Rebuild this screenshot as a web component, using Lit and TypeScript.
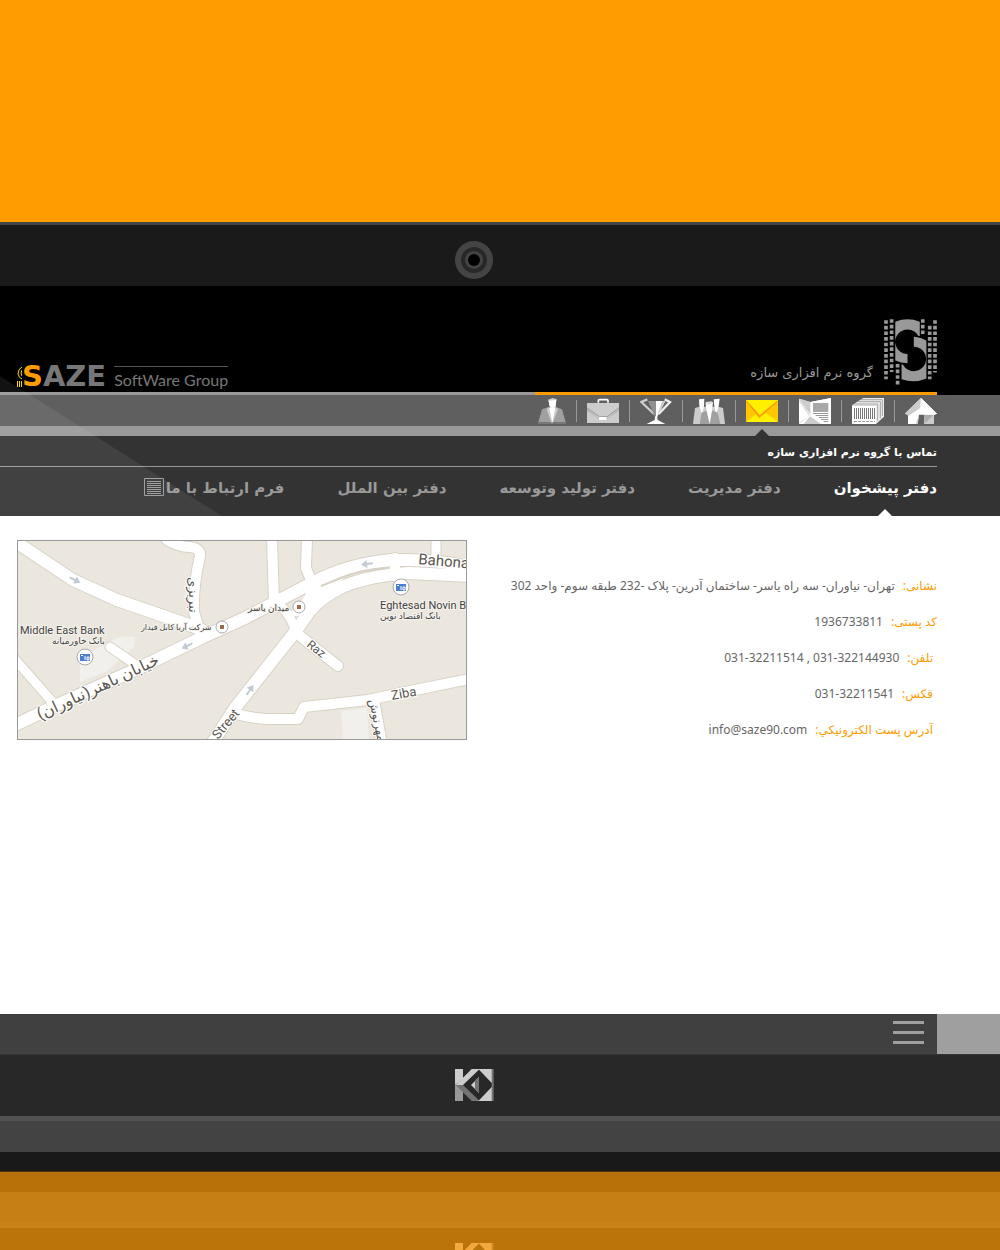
import { LitElement, html, svg, css } from "lit";
import { customElement } from "lit/decorators.js";

const person = svg`<path fill="#a0a0a0" d="M24 34 42 28H68L84 34 96 76H12Z"/><path fill="#777" d="M13 72H95L96 78H12Z"/><path fill="#ccc" d="M38 34 44 28H66L72 34 56 74H52Z"/><path fill="#fff" d="M46 30H64L55 74Z"/><path fill="#ccc" d="M42 5 56 0 68 4 67 10 44 12Z"/><path fill="#fff" d="M44 8 67 5 65 26 55 34 46 24Z"/>`;
const briefcase = svg`<path fill="none" stroke="#fff" stroke-width="5" d="M34 14V8Q34 5 37 5H60Q63 5 63 8V14"/><path fill="#ccc" d="M0 15H96V75H0Z"/><path fill="#b8b8b8" d="M0 32 36 60H60L96 32V75H0Z"/><path fill="#ccc" d="M0 75V40L36 62H60L96 40V75Z"/><path fill="none" stroke="#999" stroke-width="3" d="M0 30 37 56H60L96 30"/><path fill="#fff" d="M36 57H58V66H36Z"/>`;
const trophy = svg`<path fill="none" stroke="#ccc" stroke-width="7" d="M22 4 4 12 42 48"/><path fill="none" stroke="#eee" stroke-width="7" d="M74 4 90 12 56 48"/><path fill="#909090" d="M24 9H48V64Z"/><path fill="#fff" d="M48 9H76L48 64Z"/><path fill="#ccc" d="M66 9H76L50 60Z"/><path fill="#fff" d="M46 54H51L53 66 76 78H20L44 66Z"/>`;
const group = svg`<path fill="#ccc" d="M6 30 20 26H40L44 78H0ZM90 30 76 26H56L52 78H96Z"/><path fill="#fff" d="M18 4 34 2 33 24 27 48 19 24ZM62 4 80 2 77 24 70 48 64 24Z"/><path fill="#a0a0a0" d="M26 44 40 38H60L74 44 82 78H20Z"/><path fill="#fff" d="M38 16 60 12 57 38 50 78 40 36Z"/><path fill="#ddd" d="M38 12 56 10 60 18 38 20Z"/>`;
const mail = svg`<path fill="#ffc800" d="M0 6H96V72H0Z"/><path fill="#fff000" d="M0 72 36 44 48 54 60 44 96 72Z"/><path fill="none" stroke="#ff9c00" stroke-width="6" d="M2 8 40 56 94 8"/><path fill="#fff000" d="M0 6H96L42 51Z"/>`;
const book = svg`<path fill="#fff" d="M0 2 34 12 96 0V78H38L0 78Z"/><path fill="#ddd" d="M0 2 33 52 0 78Z"/><path fill="#fff" d="M0 10 30 54 0 74Z"/><path fill="#ccc" d="M33 55 66 78H14Z"/><path fill="#ccc" d="M0 2 34 12V50Z"/><path fill="#a8a8a8" d="M42 15 88 14V42H42Z"/><path fill="#fff" d="M34 12 96 0 88 14 42 15Z"/><path stroke="#999" stroke-width="3" d="M42 46.500H88M50 52.500H88M60 58.500H88M66 64.500H88M74 70.500H88"/>`;
const barcode = svg`<path fill="#eee" d="M24 6 34 0H96V56L72 78V22H0Z"/><path fill="none" stroke="#808080" stroke-width="2" d="M6 18H77V68M16 11H85V61M24 5H91V54"/><path fill="#fff" d="M0 22H72V78H0Z"/><path stroke="#777" stroke-width="3" d="M7.500 30V63M13.500 30V63M19.500 30V63M25.500 30V63M31.500 30V63M37.500 30V63M43.500 30V63M49.500 30V63M55.500 30V63M61.500 30V63M67.500 30V63"/><path stroke="#999" stroke-width="3" stroke-dasharray="9 3" d="M6 70.500H69"/>`;
const home = svg`<path fill="#fff" d="M48 0 96 47 87 50V78H9V50L0 47Z"/><path fill="#ccc" d="M48 0 46 30 10 54 0 46Z"/><path fill="#aaa" d="M58 50H87L60 78Z"/><path fill="#ccc" d="M87 50V78H58Z"/><path fill="#5f5f5f" d="M42 50H58V78H38Z"/><path fill="#fff" d="M48 0 96 47 88 50 46 48Z"/><path fill="#ccc" d="M32 78 42 52 38 78Z"/>`;

const sections = [
  { name: "خانه", art: home },
  { name: "محصولات", art: barcode },
  { name: "کاتالوگ", art: book },
  { name: "تماس با ما", art: mail, active: true },
  { name: "مشتریان", art: group },
  { name: "افتخارات", art: trophy },
  { name: "خدمات", art: briefcase },
  { name: "مدیریت", art: person },
];

const offices = ["دفتر پیشخوان", "دفتر مدیریت", "دفتر تولید وتوسعه", "دفتر بین الملل", "فرم ارتباط با ما"];

const contacts = [
  { label: "نشانی:", value: "تهران- نیاوران- سه راه یاسر- ساختمان آدرین- پلاک -232 طبقه سوم- واحد 302" },
  { label: "کد پستی:", value: "1936733811" },
  { label: "تلفن:", value: "031-32211514 , 031-322144930", inset: true, ltr: true },
  { label: "فکس:", value: "031-32211541", inset: true, ltr: true },
  { label: "آدرس پست الکترونیکي:", value: "info@saze90.com", inset: true, ltr: true, mail: true },
];

const roads = [
  { w: 12, d: "M-4 0 56 40 100 60 175 86 190 92" },
  { w: 10, d: "M150 0 Q162 7 172 7 Q184 8 183 16 Q176 46 177 72L184 95" },
  { w: 12, d: "M-4 186 40 165 120 129 186 97 228 78 295 43 Q330 24 375 20H390Q420 20 452 27" },
  { w: 12, d: "M452 36 391 33 Q350 36 325 47 Q304 57 292 72L278 92 218 168 196 202" },
  { w: 10, d: "M255 -2 257 63" },
  { w: 10, d: "M290 -2 289 28 295 43 292 70" },
  { w: 9, d: "M419 -2V18" },
  { w: 10, d: "M378 18V36" },
  { w: 9, d: "M258 62Q272 70 279 92" },
  { w: 10, d: "M278 92 321 126" },
  { w: 10, d: "M214 172 Q230 178 251 179H281L287 167 351 160 398 150 452 139" },
  { w: 10, d: "M357 160 365 204" },
  { w: 9, d: "M-4 117 38 165" },
  { w: 9, d: "M93 107 122 127" },
];

const mark = (light: string, mid: string, dark: string) => svg`
  <path fill=${light} d="M0 0H24V30L0 48Z"/><path fill=${mid} d="M0 48 24 32V96H0Z"/>
  <path fill=${light} d="M50 0H74L24 48H2Z"/><path fill=${dark} d="M2 48H24L74 96H50Z"/>
  <path fill=${light} d="M70 0H112V96H70L116 48Z"/><path fill=${dark} d="M110 0H116V96H110Z"/>
  <path fill=${light} d="M48 48 72 24V72Z"/><path fill=${dark} d="M60 34 72 24V72L60 60Z"/>`;

@customElement("app-root")
export class AppRoot extends LitElement {
  static styles = css`
    :host {
      display: block;
      background: #fff;
      color: #666;
      font-family: "DejaVu Sans", sans-serif;
      font-size: 12px;
      line-height: 16px;
      --edge: 63px;
    }
    * { box-sizing: border-box; }
    a { color: inherit; text-decoration: none; }
    svg { display: block; }
    ul, dl, dd, figure, h1 { margin: 0; padding: 0; list-style: none; }
    .banner { height: 222px; background: #ff9c00; }
    .dial-bar { display: flex; justify-content: center; align-items: center; height: 64px; padding: 8px 52px 0 0; border-top: 3px solid #444; background: #1a1a1a; }
    .dial { padding: 0; border: 0; background: none; }
    .header { position: relative; background: #000; }
    .shade { position: absolute; left: 0; bottom: 0; width: 222px; height: 140px; background: #fff; opacity: 0.07; clip-path: polygon(0 0, 100% 100%, 0 100%); pointer-events: none; }
    .brand { display: flex; justify-content: space-between; align-items: flex-end; height: 106px; padding: 0 var(--edge) 0 17px; }
    .wordmark { display: flex; gap: 8px; color: #777; }
    .word { display: flex; align-items: center; height: 31px; font-weight: 700; font-size: 29px; line-height: 29px; }
    .initial { color: #ff9c00; }
    .tagline { align-self: flex-start; margin-top: 5px; border-top: 1px solid #555; padding-top: 3px; font: 16px/20px Lato, sans-serif; }
    .company { display: flex; align-items: flex-end; gap: 11px; padding-bottom: 7px; color: #999; font-size: 13px; }
    .company-name { padding-bottom: 4px; }
    .rule { display: flex; height: 3px; margin-right: var(--edge); background: #999; }
    .rule-accent { width: 402px; background: #ff9c00; margin-inline-start: auto; }
    .icons { background: #5f5f5f; border-bottom: 10px solid #999; padding-right: var(--edge); }
    .icon-list { display: flex; align-items: center; gap: 10px; height: 31px; }
    .icon-item { position: relative; display: flex; gap: 10px; align-items: center; }
    .icon-item + .icon-item::before { content: ""; width: 1px; height: 22px; background: #999; }
    .current::after { content: ""; position: absolute; left: 9px; bottom: -12px; border: solid transparent; border-width: 0 7px 7px; border-bottom-color: #333; }
    .panel { background: #333; }
    .title { margin-right: var(--edge); padding: 8px 0 5px; border-bottom: 1px solid #999; color: #fff; font-size: 11px; line-height: 17px; font-weight: 700; }
    .tabs { display: flex; gap: 53px; padding-right: var(--edge); height: 49px; color: #999; font-size: 15px; line-height: 42px; font-weight: 700; white-space: nowrap; }
    .tab { position: relative; display: flex; align-items: flex-start; gap: 2px; }
    .tab svg { margin-top: 11px; }
    .selected { color: #fff; }
    .selected::after { content: ""; position: absolute; left: calc(50% - 7px); bottom: 0; border: solid transparent; border-width: 0 7px 7px; border-bottom-color: #fff; }
    .content { display: flex; align-items: flex-start; gap: 24px; min-height: 498px; padding: 24px var(--edge) 24px 17px; }
    .map { flex: 0 1 450px; border: 1px solid #999; }
    .map svg { width: 100%; }
    .map text { font-family: Roboto, "DejaVu Sans", sans-serif; fill: #444; stroke: #f5f2ec; stroke-width: 2px; paint-order: stroke; }
    .map .street { fill: #5a564e; stroke: #fff; }
    .details { flex: 1; display: grid; gap: 20px; padding-top: 38px; white-space: nowrap; font-family: "Noto Sans", "DejaVu Sans", sans-serif; }
    .detail { display: flex; gap: 8px; height: 16px; }
    .inset { padding-right: 4px; }
    .detail dt { color: #ff9c00; }
    .menu-bar { display: flex; justify-content: flex-end; height: 40px; background: #404040; border-right: var(--edge) solid #9f9f9f; padding-right: 13px; }
    .menu { display: grid; align-content: start; gap: 7px; width: 31px; padding: 7px 0 0; border: 0; background: none; }
    .menu-line { height: 3px; background: #9f9f9f; }
    .mark-bar { display: flex; justify-content: center; align-items: center; height: 62px; padding: 0 51px 2px 0; border-top: 1px solid #353535; background: #282828; }
    .step { height: 36px; border-top: 5px solid #525252; background: #434343; }
    .base { height: 20px; background: #191919; border-bottom: 1px solid #503510; }
    .mirror-base { height: 20px; background: #b87008; }
    .mirror-step { height: 36px; background: #c67f15; border-bottom: 6px solid #c88218; }
    .mirror-mark { display: flex; justify-content: center; height: 22px; padding: 15px 51px 0 0; overflow: hidden; background: #bb740a; }
    .mirror-mark svg { flex: none; }
  `;

  private pin(x: number, y: number, bank: boolean) {
    return svg`<g transform="translate(${x} ${y})"><circle r=${bank ? 8 : 6} fill="#fff" stroke="#aaa"/>${bank
      ? svg`<path fill="#4a7fd0" d="M-5-3H5V4H-5Z"/><path stroke="#fff" d="M-4-1.500H-2M0-1V3M2 0H4V3H2Z" fill="none"/>`
      : svg`<path fill="#9b6b4b" d="M-2-2H2V2H-2Z"/>`}</g>`;
  }

  private map() {
    return html`<svg viewBox="1 1 448 198" role="img" aria-label="نقشه دفتر">
      <path fill="#ebe7df" d="M0 0H450V200H0Z" />
      <path fill="#f1f0ec" d="M63 118 100 98 108 96 118 97 117 107 90 131 63 142ZM324 171 350 168 352 200H326Z" />
      <g fill="none" stroke="#d8d2c6" stroke-linecap="round" stroke-linejoin="round">${roads.map((r) => svg`<path stroke-width=${r.w + 2} d=${r.d}/>`)}</g>
      <g fill="none" stroke="#fff" stroke-linecap="round" stroke-linejoin="round">${roads.map((r) => svg`<path stroke-width=${r.w} d=${r.d}/>`)}</g>
      <path fill="#fff" d="M294 45 330 36 302 58 288 76 270 76 284 62Z" />
      <path fill="none" stroke="#d8d2c6" stroke-width="2" d="M304 46 324 38 Q345 29 372 28" />
      <g fill="#c2cad4">${[[58, 40, 27], [170, 106, 155], [350, 24, 172], [233, 150, -55]].map(
        ([x, y, a]) => svg`<path transform="translate(${x} ${y}) rotate(${a})" d="M-6-1H0V-4L6 0 0 4V1H-6Z"/>`,
      )}</g>
      ${this.pin(68, 117, true)}${this.pin(384, 47, true)}${this.pin(205, 87, false)}${this.pin(282, 67, false)}
      <text x="3" y="94" font-size="11">Middle East Bank</text>
      <text x="35" y="104" font-size="9">بانک خاورمیانه</text>
      <text x="124" y="90" font-size="8">شرکت آریا کابل فیدار</text>
      <text x="231" y="71" font-size="9">میدان یاسر</text>
      <text x="363" y="69" font-size="11">Eghtesad Novin B</text>
      <text x="363" y="79" font-size="9">بانک اقتصاد نوین</text>
      <text class="street" x="401" y="24" font-size="15" transform="rotate(5 401 24)">Bahona</text>
      <text class="street" x="375" y="160" font-size="13" transform="rotate(-10 375 160)">Ziba</text>
      <text class="street" x="289" y="106" font-size="12" transform="rotate(38 289 106)">Raz</text>
      <text class="street" x="201" y="200" font-size="13" transform="rotate(-50 201 200)">Street</text>
      <text class="street" x="172" y="37" font-size="13" transform="rotate(90 172 37)">تبریزی</text>
      <text class="street" x="352" y="160" font-size="12" transform="rotate(78 352 160)">مهرنوش</text>
      <text class="street" x="23" y="180" font-size="16" transform="rotate(-25 23 180)">خیابان باهنر(نیاوران)</text>
    </svg>`;
  }

  render() {
    return html`
      <div class="banner"></div>
      <div class="dial-bar">
        <button class="dial" aria-label="بستن">
          <svg width="38" height="38" viewBox="0 0 38 38"><circle cx="19" cy="19" r="19" fill="#444"/><circle cx="19" cy="19" r="13" fill="#282828"/><circle cx="19" cy="19" r="9" fill="#444"/><circle cx="19" cy="19" r="6" fill="#000"/></svg>
        </button>
      </div>
      <header class="header">
        <div class="brand">
          <div class="wordmark">
            <div class="word">
              <svg width="5" height="21" viewBox="0 0 5 21"><path fill="none" stroke="#ffd800" d="M5 1Q1 3 1 8Q2 12 5 13M5 4Q3 7 5 10M.5 15V21M2.500 15V21M4.500 15V21"/></svg>
              <span class="initial">S</span><span>AZE</span>
            </div>
            <div class="tagline">SoftWare Group</div>
          </div>
          <div class="company" dir="ltr">
            <span class="company-name" dir="rtl">گروه نرم افزاری سازه</span>
            <svg width="53" height="66" viewBox="492 57 160 198">
              <path fill="#999" d="M526 65Q563 50 600 65V108H596A37 37 0 0 0 563 88A37 37 0 0 0 563 162V190Q543 190 526 182ZM582 110Q605 112 620 122V236Q583 252 545 238V194H549A37 37 0 0 0 582 214A37 37 0 0 0 582 140Z"/>
              <path fill="none" stroke="#999" stroke-width="11" stroke-dasharray="11 6" d="M498 60V238M515 57V216M533 192V255M609 57V102M630 77V238M646 60V218"/>
            </svg>
          </div>
        </div>
        <div class="rule"><div class="rule-accent"></div></div>
        <nav class="icons" dir="rtl">
          <ul class="icon-list">
            ${sections.map((s) => html`<li class="icon-item ${s.active ? "current" : ""}"><a href="#" aria-label=${s.name}><svg width="32" height="26" viewBox="0 0 96 78">${s.art}</svg></a></li>`)}
          </ul>
        </nav>
        <div class="panel">
          <h1 class="title" dir="rtl">تماس با گروه نرم افزاری سازه</h1>
          <nav class="tabs" dir="rtl">
            ${offices.map((o, i) => html`<a href="#" class="tab ${i === 0 ? "selected" : ""}">${o}${i === offices.length - 1
              ? html`<svg width="20" height="18" viewBox="0 0 20 18"><path fill="none" stroke="#999" d="M.5.5H19.500V17.500H.5ZM3 3.500H17M3 5.500H17M3 7.500H17M3 9.500H17M3 11.500H17M3 13.500H17M3 15.500H17"/></svg>`
              : ""}</a>`)}
          </nav>
        </div>
        <div class="shade"></div>
      </header>
      <main class="content">
        <figure class="map">${this.map()}</figure>
        <dl class="details" dir="rtl">
          ${contacts.map((c) => html`<div class="detail ${c.inset ? "inset" : ""}"><dt>${c.label}</dt><dd dir=${c.ltr ? "ltr" : "rtl"}>${c.mail ? html`<a href="mailto:info@saze90.com">${c.value}</a>` : c.value}</dd></div>`)}
        </dl>
      </main>
      <footer>
        <div class="menu-bar">
          <button class="menu" aria-label="منو"><span class="menu-line"></span><span class="menu-line"></span><span class="menu-line"></span></button>
        </div>
        <div class="mark-bar"><svg width="39" height="32" viewBox="0 0 117 96">${mark("#ccc", "#999", "#737373")}</svg></div>
        <div class="step"></div>
        <div class="base"></div>
        <div class="mirror-base"></div>
        <div class="mirror-step"></div>
        <div class="mirror-mark" aria-hidden="true"><svg width="39" height="32" viewBox="0 0 117 96">${mark("#f3a93c", "#e09a30", "#d08a20")}</svg></div>
      </footer>
    `;
  }
}
